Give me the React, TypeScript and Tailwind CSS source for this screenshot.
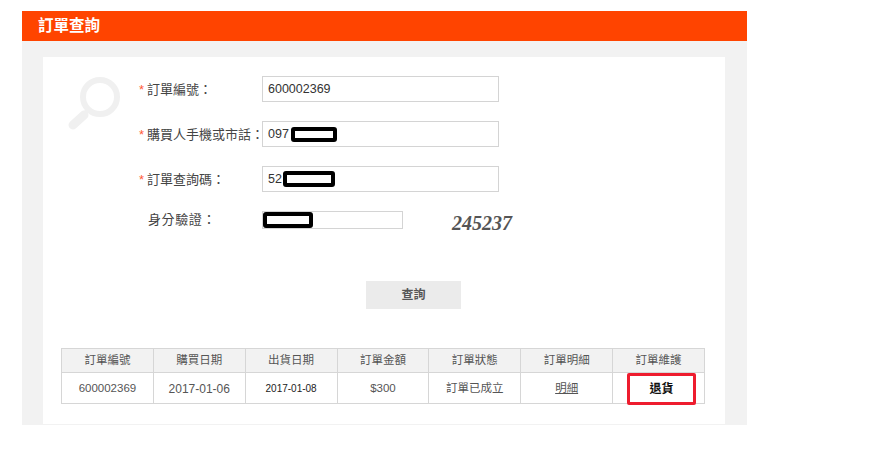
const cjk = "font-['Liberation_Sans','Noto_Sans_CJK_TC',sans-serif]";

const columns = ["訂單編號", "購買日期", "出貨日期", "訂單金額", "訂單狀態", "訂單明細", "訂單維護"];

function Redaction({ className }: { className: string }) {
  return <span className={`block rounded-[3px] border-[4px] border-black bg-white ${className}`} />;
}

function Field({ label, children }: { label: string; children: React.ReactNode }) {
  return (
    <div className="flex h-[26px] items-center">
      <div className="w-[124px] pt-[1px] text-[13px] text-[#444] whitespace-nowrap">
        <span className="ml-[1px] mr-[3px] text-[#ff5a36]">*</span>
        {label}
      </div>
      {children}
    </div>
  );
}

function TextBox({ children }: { children: React.ReactNode }) {
  return (
    <div className="flex h-[26px] w-[237px] items-center border border-[#d4d4d4] bg-white pl-[5px] text-[12.5px] text-[#333]">
      {children}
    </div>
  );
}

export default function App() {
  return (
    <div className={`min-h-[450px] bg-white pt-[11px] pl-[22px] ${cjk}`}>
      <div className="w-[725px]">
        <div className="flex h-[30px] items-center bg-[#ff4400] pl-[16px] text-[15.5px] font-bold text-white">
          訂單查詢
        </div>
        <div className="bg-[#f2f2f2] pl-[21px] pr-[22px] pt-[16px] pb-[1px]">
          <div className="h-[367px] bg-white pt-[19px] pl-[18px] pr-[20px]">
            <div className="flex h-[205px]">
              <div className="w-[77px]">
                <svg width="54" height="56" viewBox="0 0 54 56" className="ml-[6px]" fill="none">
                  <circle cx="33" cy="21" r="17" stroke="#f0f0f0" strokeWidth="6" />
                  <path d="M22 33 L16 39" stroke="#f0f0f0" strokeWidth="4" />
                  <path d="M17 39 L6 49" stroke="#f0f0f0" strokeWidth="9" strokeLinecap="round" />
                </svg>
              </div>
              <div className="flex flex-col gap-[19px]">
                <Field label="訂單編號：">
                  <TextBox>600002369</TextBox>
                </Field>
                <Field label="購買人手機或市話：">
                  <TextBox>
                    097
                    <Redaction className="ml-[2px] h-[15px] w-[46px]" />
                  </TextBox>
                </Field>
                <Field label="訂單查詢碼：">
                  <TextBox>
                    52
                    <Redaction className="ml-[1px] h-[16px] w-[52px]" />
                  </TextBox>
                </Field>
                <div className="flex h-[26px] items-start">
                  <div className="w-[124px] pl-[10px] text-[13px] leading-[18px] tracking-[0.6px] text-[#444]">
                    身分驗證：
                  </div>
                  <div className="flex h-[18px] w-[141px] items-center border border-[#d4d4d4]">
                    <Redaction className="h-[16px] w-[50px]" />
                  </div>
                  <div className="ml-[49px] font-['Liberation_Serif',serif] text-[20px] leading-[24px] font-bold italic text-[#555]">
                    245237
                  </div>
                </div>
              </div>
            </div>
            <div className="pl-[305px]">
              <button className="h-[28px] w-[95px] bg-[#ebebeb] text-[12px] font-bold text-[#555]">查詢</button>
            </div>
            <table className="mt-[39px] w-[644px] table-fixed border-collapse text-center text-[11.5px] text-[#555]">
              <thead>
                <tr className="h-[24px] bg-[#f2f2f2]">
                  {columns.map((c) => (
                    <th key={c} className="border border-[#d6d6d6] pt-[1px] font-normal">
                      {c}
                    </th>
                  ))}
                </tr>
              </thead>
              <tbody>
                <tr className="h-[31px]">
                  <td className="border border-[#d6d6d6] pt-[1px]">600002369</td>
                  <td className="border border-[#d6d6d6] pt-[1px] text-[12px]">2017-01-06</td>
                  <td className="border border-[#d6d6d6] pt-[1px] text-[10px] text-[#222]">2017-01-08</td>
                  <td className="border border-[#d6d6d6] pt-[1px]">$300</td>
                  <td className="border border-[#d6d6d6] pt-[1px]">訂單已成立</td>
                  <td className="border border-[#d6d6d6] pt-[1px] underline">明細</td>
                  <td className="border border-[#d6d6d6] p-0">
                    <div className="relative h-[30px]">
                      <div className="absolute left-[14px] top-[0px] flex h-[32px] w-[69px] items-center justify-center rounded-[2px] border-[3px] border-[#ee1c2e] font-['Liberation_Serif','Noto_Sans_CJK_TC',serif] text-[12px] font-bold text-[#111]">
                        退貨
                      </div>
                    </div>
                  </td>
                </tr>
              </tbody>
            </table>
          </div>
        </div>
      </div>
    </div>
  );
}
